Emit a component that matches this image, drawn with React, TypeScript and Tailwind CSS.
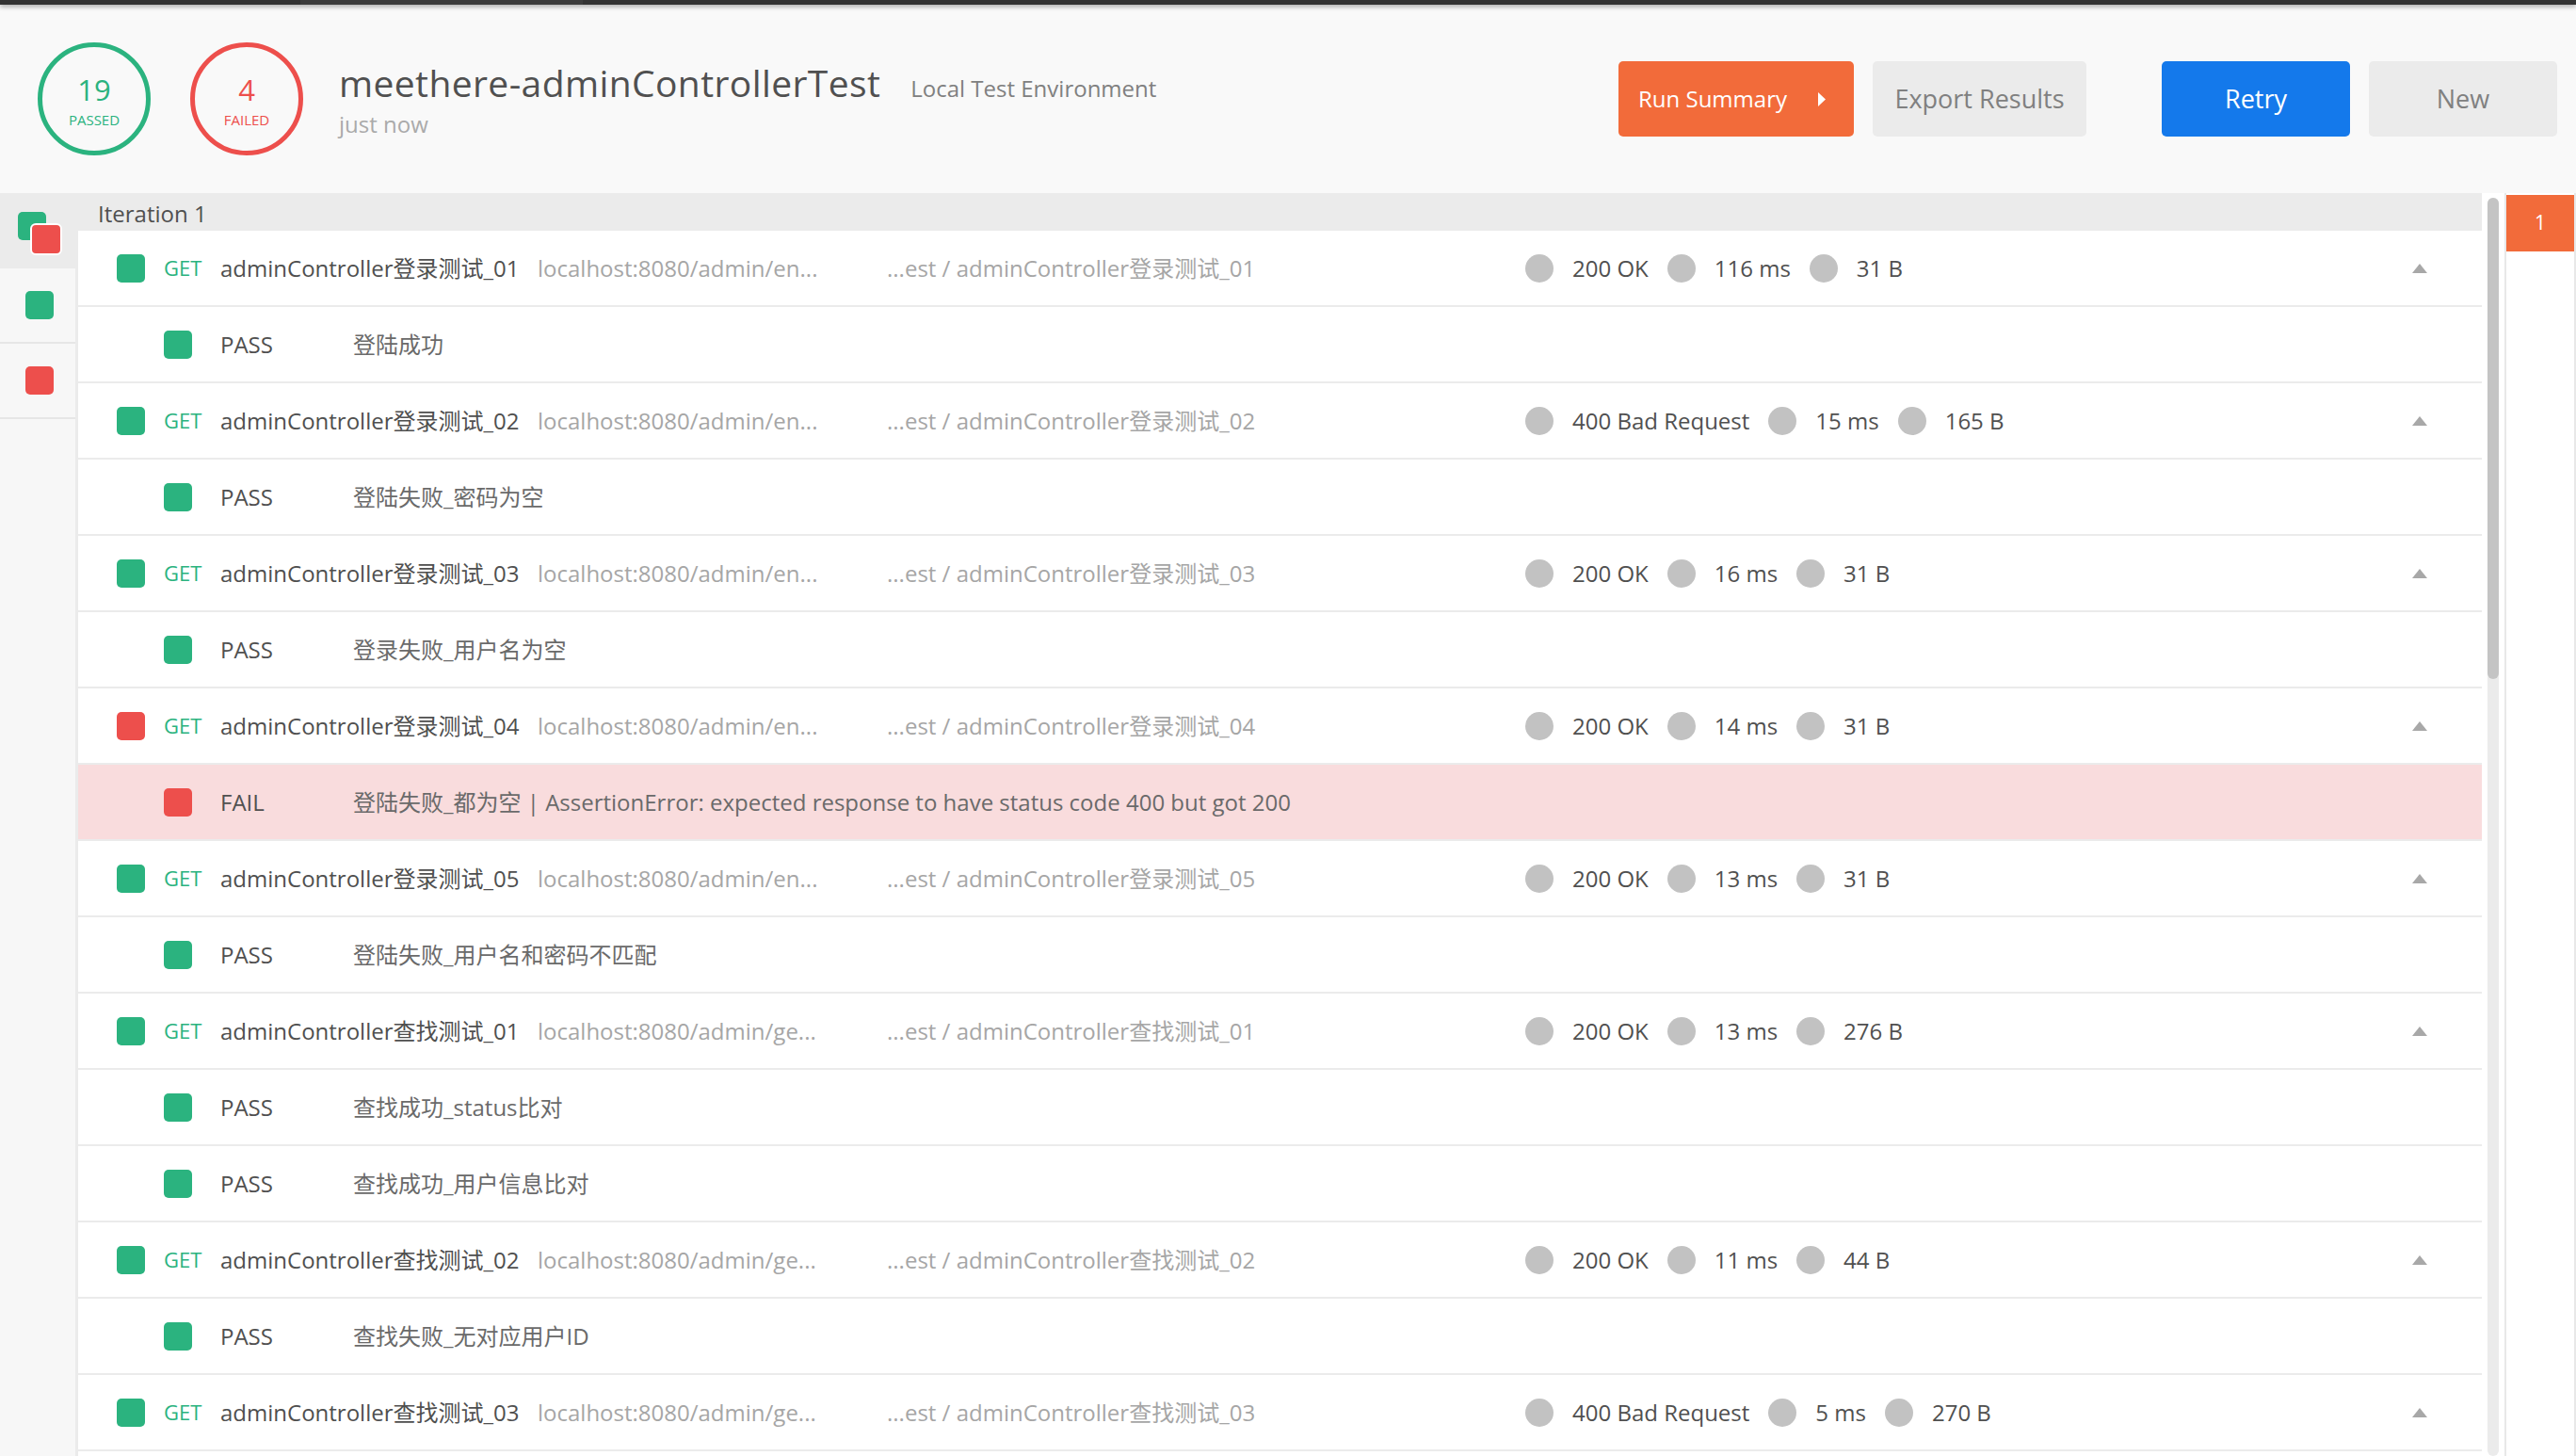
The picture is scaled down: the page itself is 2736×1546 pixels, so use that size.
import React from "react";

interface Assertion {
  pass: boolean;
  text: string;
}

interface RequestResult {
  ok: boolean;
  name: string;
  url: string;
  path: string;
  status: string;
  time: string;
  size: string;
  assertions: Assertion[];
}

const LOGIN_URL = "localhost:8080/admin/en...";
const GET_URL = "localhost:8080/admin/ge...";

const REQUESTS: RequestResult[] = [
  {
    ok: true,
    name: "adminController登录测试_01",
    url: LOGIN_URL,
    path: "...est / adminController登录测试_01",
    status: "200 OK",
    time: "116 ms",
    size: "31 B",
    assertions: [{ pass: true, text: "登陆成功" }],
  },
  {
    ok: true,
    name: "adminController登录测试_02",
    url: LOGIN_URL,
    path: "...est / adminController登录测试_02",
    status: "400 Bad Request",
    time: "15 ms",
    size: "165 B",
    assertions: [{ pass: true, text: "登陆失败_密码为空" }],
  },
  {
    ok: true,
    name: "adminController登录测试_03",
    url: LOGIN_URL,
    path: "...est / adminController登录测试_03",
    status: "200 OK",
    time: "16 ms",
    size: "31 B",
    assertions: [{ pass: true, text: "登录失败_用户名为空" }],
  },
  {
    ok: false,
    name: "adminController登录测试_04",
    url: LOGIN_URL,
    path: "...est / adminController登录测试_04",
    status: "200 OK",
    time: "14 ms",
    size: "31 B",
    assertions: [
      {
        pass: false,
        text: "登陆失败_都为空 | AssertionError: expected response to have status code 400 but got 200",
      },
    ],
  },
  {
    ok: true,
    name: "adminController登录测试_05",
    url: LOGIN_URL,
    path: "...est / adminController登录测试_05",
    status: "200 OK",
    time: "13 ms",
    size: "31 B",
    assertions: [{ pass: true, text: "登陆失败_用户名和密码不匹配" }],
  },
  {
    ok: true,
    name: "adminController查找测试_01",
    url: GET_URL,
    path: "...est / adminController查找测试_01",
    status: "200 OK",
    time: "13 ms",
    size: "276 B",
    assertions: [
      { pass: true, text: "查找成功_status比对" },
      { pass: true, text: "查找成功_用户信息比对" },
    ],
  },
  {
    ok: true,
    name: "adminController查找测试_02",
    url: GET_URL,
    path: "...est / adminController查找测试_02",
    status: "200 OK",
    time: "11 ms",
    size: "44 B",
    assertions: [{ pass: true, text: "查找失败_无对应用户ID" }],
  },
  {
    ok: true,
    name: "adminController查找测试_03",
    url: GET_URL,
    path: "...est / adminController查找测试_03",
    status: "400 Bad Request",
    time: "5 ms",
    size: "270 B",
    assertions: [],
  },
];

export default function App() {
  return (
    <div className="flex h-[1546px] w-[2736px] flex-col overflow-hidden bg-white font-['Open_Sans','Noto_Sans_CJK_SC',sans-serif] text-[#505050]">
      {/* window top strip */}
      <div className="relative z-10 flex h-[5px] shrink-0 bg-[#333333] shadow-[0_2px_5px_rgba(0,0,0,0.35)]">
        <div className="ml-[319px] w-[300px] bg-[#3c3c3c]" />
      </div>

      {/* Header */}
      <header className="flex h-[200px] shrink-0 items-center bg-[#f9f9f9] pl-[40px] pr-[20px]">
        <Counter value="19" label="PASSED" pass />
        <div className="ml-[42px]">
          <Counter value="4" label="FAILED" pass={false} />
        </div>

        <div className="ml-[38px] flex flex-col">
          <div className="flex items-baseline gap-[32px]">
            <h1 className="whitespace-nowrap text-[39px] leading-[48px] font-normal tracking-[0.4px] text-[#505050]">
              meethere-adminControllerTest
            </h1>
            <span className="whitespace-nowrap text-[24px] text-[#808080]">Local Test Environment</span>
          </div>
          <div className="mt-[5px] text-[24px] leading-[30px] text-[#aaaaaa]">just now</div>
        </div>

        <div className="ml-auto flex items-center">
          <button className="flex h-[80px] w-[250px] items-center justify-between rounded-[5px] bg-[#f26b3a] pl-[21px] pr-[30px] text-[24px] text-white">
            Run Summary
            <svg width="8" height="15" viewBox="0 0 8 15">
              <polygon points="0,0 8,7.5 0,15" fill="#ffffff" />
            </svg>
          </button>
          <button className="ml-[20px] flex h-[80px] w-[227px] items-center justify-center rounded-[5px] bg-[#ebebeb] text-[27px] text-[#808080]">
            Export Results
          </button>
          <button className="ml-[80px] flex h-[80px] w-[200px] items-center justify-center rounded-[5px] bg-[#1479eb] text-[27px] text-white">
            Retry
          </button>
          <button className="ml-[20px] flex h-[80px] w-[200px] items-center justify-center rounded-[5px] bg-[#ebebeb] text-[27px] text-[#808080]">
            New
          </button>
        </div>
      </header>

      {/* Body */}
      <div className="flex min-h-0 flex-1">
        {/* iteration sidebar */}
        <div className="w-[83px] shrink-0 border-r-[3px] border-[#ebebeb] bg-[#f7f7f7]">
          <div className="flex h-[80px] items-center justify-center bg-[#ebebeb] pl-[4px] pt-[6px]">
            <div className="relative h-[46px] w-[47px]">
              <div className="absolute left-0 top-0 h-[30px] w-[30px] rounded-[5px] bg-[#2bb37f]" />
              <div className="absolute left-[13px] top-[12px] h-[34px] w-[34px] rounded-[6px] border-2 border-white bg-[#ed4f4c]" />
            </div>
          </div>
          <div className="flex h-[80px] items-center justify-center border-b-2 border-[#e6e6e6] pl-[4px]">
            <Square ok />
          </div>
          <div className="flex h-[80px] items-center justify-center border-b-2 border-[#e6e6e6] pl-[4px]">
            <Square ok={false} />
          </div>
        </div>

        {/* results list */}
        <div className="min-w-0 flex-1 bg-white">
          <div className="flex h-[40px] items-center bg-[#ebebeb] pl-[21px] pt-[4px] text-[24px] text-[#505050]">
            Iteration 1
          </div>
          {REQUESTS.map((r) => (
            <RequestBlock key={r.name} r={r} />
          ))}
        </div>

        {/* scrollbar */}
        <div className="flex w-[24px] shrink-0 flex-col bg-white px-[6px] pt-[5px]">
          <div className="flex-1 rounded-full bg-[#ebebeb]">
            <div className="h-[511px] rounded-full bg-[#c4c4c4]" />
          </div>
        </div>

        {/* iteration tabs */}
        <div className="w-[76px] shrink-0 border-x-2 border-[#e8e8e8] bg-white pt-[2px]">
          <div className="flex h-[60px] items-center justify-center bg-[#f26b3a] text-[21px] text-white">1</div>
        </div>
      </div>
    </div>
  );
}

// ─────────────────────────────────────────────────────────────
// Helper components
// ─────────────────────────────────────────────────────────────

function Counter({ value, label, pass }: { value: string; label: string; pass: boolean }) {
  return (
    <div
      className={`flex h-[120px] w-[120px] flex-col items-center justify-center rounded-full border-[5px] pt-[5px] ${
        pass ? "border-[#2bb37f] text-[#2bb37f]" : "border-[#ed4f4c] text-[#ed4f4c]"
      }`}
    >
      <span className="text-[31px] leading-[32px]">{value}</span>
      <span className="mt-[7px] text-[15px] leading-[18px]">{label}</span>
    </div>
  );
}

function Square({ ok }: { ok: boolean }) {
  return <div className={`h-[30px] w-[30px] shrink-0 rounded-[5px] ${ok ? "bg-[#2bb37f]" : "bg-[#ed4f4c]"}`} />;
}

function Dot() {
  return <div className="h-[30px] w-[30px] shrink-0 rounded-full bg-[#c2c2c2]" />;
}

function RequestBlock({ r }: { r: RequestResult }) {
  return (
    <>
      <div className="flex h-[81px] items-center border-b-2 border-[#ebebeb] pl-[41px] pr-[58px]">
        <div className="flex w-[1496px] shrink-0 items-center">
          <Square ok={r.ok} />
          <span className="ml-[20px] w-[40px] text-[22px] text-[#2bb37f]">GET</span>
          <span className="ml-[20px] w-[317px] whitespace-nowrap text-[24px] text-[#4f4f4f]">{r.name}</span>
          <span className="ml-[20px] w-[351px] whitespace-nowrap text-[24px] text-[#a6a6a6]">{r.url}</span>
          <span className="ml-[20px] whitespace-nowrap text-[24px] text-[#a6a6a6]">{r.path}</span>
        </div>
        <div className="flex items-center gap-[20px] whitespace-nowrap text-[24px] text-[#505050]">
          <Dot />
          <span>{r.status}</span>
          <Dot />
          <span>{r.time}</span>
          <Dot />
          <span>{r.size}</span>
        </div>
        <svg className="ml-auto" width="16" height="10" viewBox="0 0 16 10">
          <polygon points="8,0 16,10 0,10" fill="#a8a8a8" />
        </svg>
      </div>
      {r.assertions.map((a) => (
        <div
          key={a.text}
          className={`flex h-[81px] items-center border-b-2 border-[#ebebeb] pl-[91px] ${a.pass ? "bg-white" : "bg-[#f9dcdd]"}`}
        >
          <Square ok={a.pass} />
          <span className="ml-[30px] w-[121px] text-[24px] text-[#505050]">{a.pass ? "PASS" : "FAIL"}</span>
          <span className="ml-[20px] whitespace-nowrap text-[24px] text-[#6a6a6a]">{a.text}</span>
        </div>
      ))}
    </>
  );
}
